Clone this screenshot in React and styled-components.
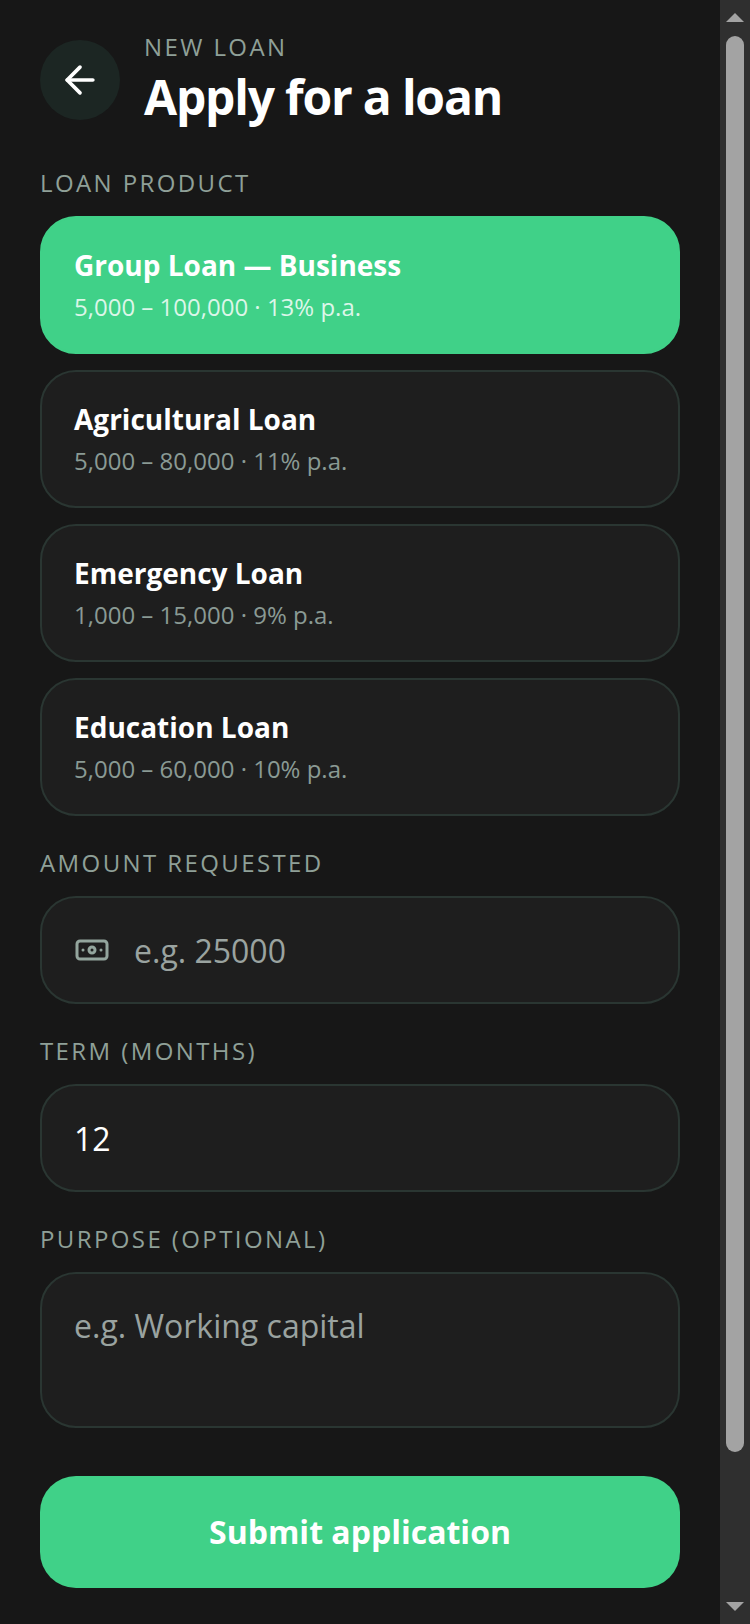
import styled, { createGlobalStyle } from 'styled-components';
import { ArrowLeft, Banknote } from 'lucide-react';

const GlobalStyle = createGlobalStyle`
  html, body {
    margin: 0;
    padding: 0;
    background: #171717;
    overflow: hidden;
  }
  * {
    box-sizing: border-box;
  }
`;

const products = [
  { name: 'Group Loan — Business', detail: '5,000 – 100,000 · 13% p.a.', selected: true },
  { name: 'Agricultural Loan', detail: '5,000 – 80,000 · 11% p.a.' },
  { name: 'Emergency Loan', detail: '1,000 – 15,000 · 9% p.a.' },
  { name: 'Education Loan', detail: '5,000 – 60,000 · 10% p.a.' },
];

const Screen = styled.div`
  display: flex;
  height: 1624px;
  background: #171717;
  font-family: 'Open Sans', sans-serif;
  color: #fff;
`;

const Page = styled.main`
  flex: 1;
  min-width: 0;
  padding: 32px 40px 0;
  overflow: hidden;
`;

const Header = styled.header`
  display: flex;
  align-items: flex-start;
  gap: 24px;
`;

const BackButton = styled.button`
  display: flex;
  align-items: center;
  justify-content: center;
  width: 80px;
  height: 80px;
  margin-top: 8px;
  padding: 0;
  border: none;
  border-radius: 50%;
  background: #1c2623;
  color: #fff;
`;

const Eyebrow = styled.div`
  font-size: 24px;
  line-height: 30px;
  letter-spacing: 2.4px;
  color: #8fa098;
`;

const Title = styled.h1`
  margin: 5px 0 0;
  font-size: 48px;
  line-height: 60px;
  font-weight: 700;
  letter-spacing: -1.2px;
`;

const Label = styled.div`
  margin: ${(p) => p.$top}px 0 18px;
  font-size: 24px;
  line-height: 30px;
  letter-spacing: 2.4px;
  color: #8fa098;
`;

const ProductList = styled.div`
  display: flex;
  flex-direction: column;
  gap: 16px;
`;

const ProductCard = styled.div`
  height: 138px;
  padding: 28px 32px;
  border: 2px solid ${(p) => (p.$selected ? '#40d188' : '#2a3632')};
  border-radius: 36px;
  background: ${(p) => (p.$selected ? '#40d188' : '#1e1e1e')};
`;

const ProductName = styled.div`
  font-size: 28px;
  line-height: 38px;
  font-weight: 700;
`;

const ProductDetail = styled.div`
  margin-top: 7px;
  font-size: 24px;
  line-height: 32px;
  color: ${(p) => (p.$selected ? '#dcf6e8' : '#8a9a94')};
`;

const Field = styled.div`
  display: flex;
  align-items: center;
  gap: 24px;
  height: 108px;
  padding: 0 32px;
  border: 2px solid #2a3632;
  border-radius: 36px;
  background: #1e1e1e;
  color: #93a59d;
`;

const Input = styled.input`
  flex: 1;
  min-width: 0;
  padding: 0;
  border: none;
  outline: none;
  background: transparent;
  font-family: inherit;
  font-size: 32px;
  color: #fff;

  &::placeholder {
    color: #9aa3a0;
    opacity: 1;
  }
`;

const TextArea = styled.textarea`
  display: block;
  width: 100%;
  height: 156px;
  padding: 30px 32px;
  border: 2px solid #2a3632;
  border-radius: 36px;
  outline: none;
  resize: none;
  background: #1e1e1e;
  font-family: inherit;
  font-size: 32px;
  line-height: 44px;
  color: #fff;

  &::placeholder {
    color: #9aa3a0;
    opacity: 1;
  }
`;

const SubmitButton = styled.button`
  display: block;
  width: 100%;
  height: 112px;
  margin-top: 48px;
  padding: 0 0 2px;
  border: none;
  border-radius: 36px;
  background: #40d188;
  font-family: inherit;
  font-size: 32px;
  font-weight: 700;
  color: #fff;
`;

const ScrollRail = styled.aside`
  display: flex;
  flex-direction: column;
  align-items: center;
  flex: none;
  width: 30px;
  background: #2f2f2f;
`;

const ScrollArrow = styled.svg`
  display: block;
  flex: none;
  width: 30px;
  height: 30px;
`;

const ScrollTrack = styled.div`
  flex: 1;
  width: 100%;
  padding: 6px 6px 0;
`;

const ScrollThumb = styled.div`
  height: 1416px;
  border-radius: 9px;
  background: #a3a3a3;
`;

const App = () => {
  return (
    <>
      <GlobalStyle />
      <Screen>
        <Page>
          <Header>
            <BackButton aria-label="Back">
              <ArrowLeft size={44} strokeWidth={2} />
            </BackButton>
            <div>
              <Eyebrow>NEW LOAN</Eyebrow>
              <Title>Apply for a loan</Title>
            </div>
          </Header>

          <Label $top={41}>LOAN PRODUCT</Label>
          <ProductList>
            {products.map((product) => (
              <ProductCard key={product.name} $selected={product.selected}>
                <ProductName>{product.name}</ProductName>
                <ProductDetail $selected={product.selected}>{product.detail}</ProductDetail>
              </ProductCard>
            ))}
          </ProductList>

          <Label $top={32}>AMOUNT REQUESTED</Label>
          <Field>
            <Banknote size={36} strokeWidth={2} />
            <Input placeholder="e.g. 25000" />
          </Field>

          <Label $top={32}>TERM (MONTHS)</Label>
          <Field>
            <Input defaultValue="12" />
          </Field>

          <Label $top={32}>PURPOSE (OPTIONAL)</Label>
          <TextArea placeholder="e.g. Working capital" />

          <SubmitButton>Submit application</SubmitButton>
        </Page>
        <ScrollRail>
          <ScrollArrow viewBox="0 0 30 30">
            <path d="M6 22 L15 13 L24 22 Z" fill="#a3a3a3" />
          </ScrollArrow>
          <ScrollTrack>
            <ScrollThumb />
          </ScrollTrack>
          <ScrollArrow viewBox="0 0 30 30">
            <path d="M6 8 L24 8 L15 17 Z" fill="#a3a3a3" />
          </ScrollArrow>
        </ScrollRail>
      </Screen>
    </>
  );
};

export default App;
